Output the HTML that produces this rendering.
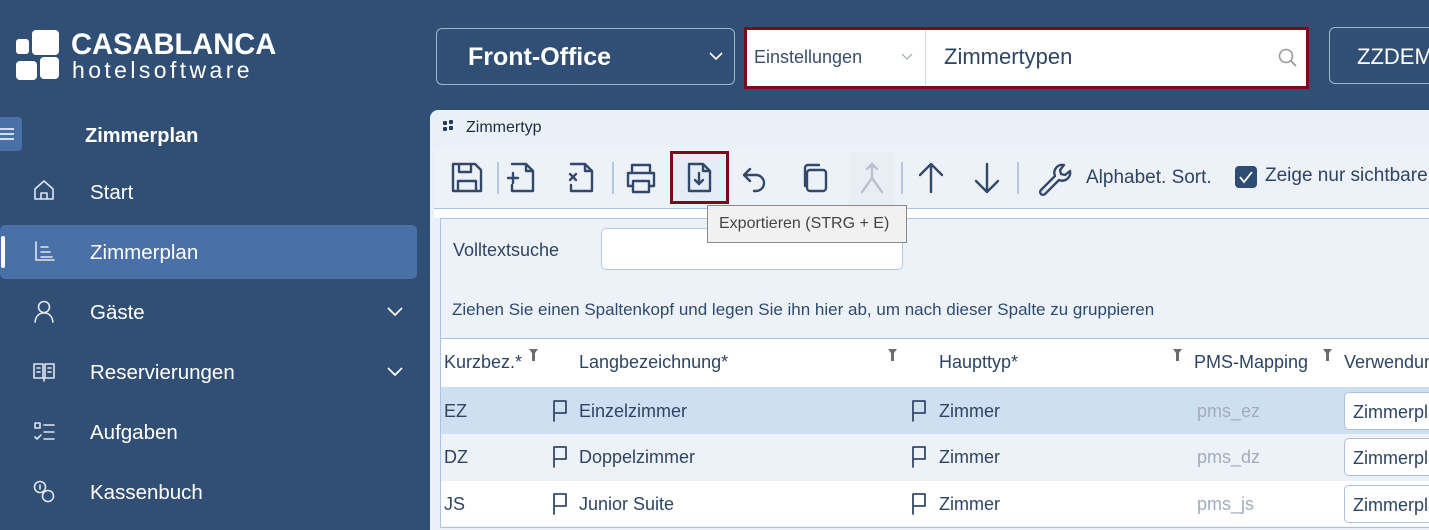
<!DOCTYPE html>
<html><head><meta charset="utf-8"><style>
*{box-sizing:border-box;margin:0;padding:0}
body{width:1429px;height:521px;overflow:hidden;background:#314f75;font-family:"Liberation Sans",sans-serif;position:relative}
.a{position:absolute}
.w{color:#fff}
.nav{font-size:20.5px;color:#fff}
.ic{stroke:#dfe6f0;fill:none;stroke-width:1.6;stroke-linecap:round;stroke-linejoin:round}
.tb{stroke:#34496a;fill:none;stroke-width:2.4;stroke-linecap:round;stroke-linejoin:round}
.sep{position:absolute;top:162px;width:2px;height:32px;background:#b5c8e2}
.hd{font-size:18px;color:#2e4463;top:352px}
.cell{font-size:18px;color:#2e4463}
.sel{position:absolute;left:1344px;width:100px;height:38px;background:#fff;border:1px solid #aac0dd;border-radius:5px;font-size:18px;color:#2e4463;padding:9px 0 0 8px}
</style></head><body>
<!-- logo -->
<div class="a" style="left:16px;top:39px;width:13px;height:15px;background:#fff;border-radius:3px"></div>
<div class="a" style="left:32px;top:30px;width:27px;height:25px;background:#fff;border-radius:4px"></div>
<div class="a" style="left:16px;top:61px;width:21px;height:19px;background:#fff;border-radius:4px"></div>
<div class="a" style="left:40px;top:57px;width:19px;height:22px;background:#fff;border-radius:4px"></div>
<div class="a w" style="left:71px;top:28px;font-size:30px;font-weight:bold;transform:scaleX(0.97);transform-origin:left">CASABLANCA</div>
<div class="a w" style="left:72px;top:57px;font-size:23px;letter-spacing:3.4px">hotelsoftware</div>
<!-- top controls -->
<div class="a" style="left:436px;top:28px;width:299px;height:57px;border:1px solid #9fb4d1;border-radius:6px"></div>
<div class="a w" style="left:468px;top:43px;font-size:25px;font-weight:bold">Front-Office</div>
<svg class="a" style="left:708px;top:50px" width="16" height="12"><path d="M2 3l6 6 6-6" stroke="#fff" stroke-width="1.6" fill="none"/></svg>
<div class="a" style="left:744px;top:27px;width:565px;height:62px;border:3px solid #7b0a1c;background:#fff"></div>
<div class="a" style="left:925px;top:30px;width:1px;height:55px;background:#d0d8e4"></div>
<div class="a" style="left:754px;top:47px;font-size:18px;color:#3b4e68">Einstellungen</div>
<svg class="a" style="left:900px;top:52px" width="14" height="10"><path d="M2 2l5 5 5-5" stroke="#9aa" stroke-width="1.2" fill="none"/></svg>
<div class="a" style="left:944px;top:44px;font-size:22px;color:#2e4463">Zimmertypen</div>
<svg class="a" style="left:1277px;top:47px" width="22" height="22"><circle cx="9" cy="9" r="6.5" stroke="#999" stroke-width="1.6" fill="none"/><path d="M14 14l5 5" stroke="#999" stroke-width="1.8"/></svg>
<div class="a" style="left:1329px;top:27px;width:120px;height:57px;border:1px solid #9fb4d1;border-radius:6px"></div>
<div class="a w" style="left:1357px;top:44px;font-size:22px">ZZDEMO</div>
<!-- sidebar -->
<div class="a" style="left:-6px;top:117px;width:28px;height:34px;background:#4a70a8;border-radius:4px"></div>
<svg class="a" style="left:0;top:126px" width="16" height="16"><path d="M0 3h14M0 8h14M0 13h14" stroke="#fff" stroke-width="1.6"/></svg>
<div class="a w" style="left:85px;top:125px;font-size:20px;font-weight:bold">Zimmerplan</div>
<div class="a" style="left:0;top:225px;width:417px;height:54px;background:#4a70a8;border-radius:5px"></div>
<div class="a" style="left:1px;top:236px;width:4px;height:32px;background:#fff;border-radius:2px"></div>
<div class="a nav" style="left:90px;top:181px">Start</div>
<div class="a nav" style="left:90px;top:241px">Zimmerplan</div>
<div class="a nav" style="left:90px;top:301px">Gäste</div>
<div class="a nav" style="left:90px;top:361px">Reservierungen</div>
<div class="a nav" style="left:90px;top:421px">Aufgaben</div>
<div class="a nav" style="left:90px;top:481px">Kassenbuch</div>
<svg class="a" style="left:0;top:0" width="430" height="521">
<path class="ic" d="M35 199v-10l9-8 9 8v10zM41 199v-6h6v6"/>
<path class="ic" d="M36 242v18h18M41 247h7M41 252h9M41 257h11"/>
<circle class="ic" cx="44" cy="307" r="5.5"/><path class="ic" d="M35 322c1-7 5-9 9-9s8 2 9 9"/>
<path class="ic" d="M34 364h9v14h-9zM45 364h9v14h-9zM37 368h3M37 372h3M48 368h3M48 372h3M44 378v3"/>
<path class="ic" d="M35 423h5v5h-5zM44 425h10M44 432h10M44 439h10M35 437l2 2 4-4"/>
<circle class="ic" cx="40" cy="487" r="5.5"/><circle class="ic" cx="48" cy="496" r="5.5"/><path class="ic" d="M40 485v4"/>
<path d="M388 308l7 7 7-7M388 368l7 7 7-7" stroke="#fff" stroke-width="1.8" fill="none"/>
</svg>
<!-- window -->
<div class="a" style="left:430px;top:110px;width:1010px;height:420px;background:#eaf0f7;border-radius:8px 0 0 0"></div>
<div class="a" style="left:443px;top:121px;width:4px;height:4px;background:#233a5a;border-radius:1px;box-shadow:6px -1px 0 #233a5a,0 6px 0 #233a5a,6px 5px 0 #233a5a"></div>
<div class="a" style="left:466px;top:119px;font-size:16px;color:#1c2b40">Zimmertyp</div>
<div class="a" style="left:434px;top:147px;width:1000px;height:62px;background:#edf2f9;border-bottom:1px solid #a9c3e6;border-radius:6px 0 0 0"></div>
<div class="a" style="left:670px;top:151px;width:59px;height:53px;border:3px solid #7b0a1c;background:#e4ecf6"></div>
<div class="a" style="left:849px;top:152px;width:45px;height:54px;background:#e9eef5"></div>
<div class="sep" style="left:497px"></div><div class="sep" style="left:612px"></div><div class="sep" style="left:901px"></div><div class="sep" style="left:1017px"></div>
<svg class="a" style="left:430px;top:140px" width="660" height="70">
<path class="tb" d="M23 24h22l6 6v21H23zM29 24v8h12v-8M28 51v-10h18v10"/>
<path class="tb" d="M82 24h14l7 7v20H82v-6M96 24v7h7M78 38h10M83 33v10"/>
<path class="tb" d="M141 24h14l7 7v20h-21v-6M155 24v7h7M140 34l6 6M146 34l-6 6"/>
<path class="tb" d="M202 33v-8h18v8M198 33h26v13h-5M203 46h-5V33M203 41h16v11h-16z"/>
<path class="tb" d="M259 24h14l7 7v20h-21zM273 24v7h7M269 33v10M265 40l4 4 4-4"/>
<path class="tb" d="M320 29l-6 6 6 6M314 35h12a8 8 0 010 16h-2"/>
<path class="tb" d="M375 46v-18a3 3 0 013-3h11M380 30h13a3 3 0 013 3v15a3 3 0 01-3 3h-13a3 3 0 01-3-3V33a3 3 0 013-3z"/>
<path d="M442 24v14l-10 14M442 38l10 14M437 29l5-5 5 5" stroke="#b9c3d0" stroke-width="2.4" fill="none" stroke-linecap="round"/>
<path class="tb" d="M501 52V25M490 35l11-11 11 11"/>
<path class="tb" d="M557 24v27M546 41l11 11 11-11"/>
<path class="tb" d="M634 25a8 8 0 00-9 11l-14 14a2.5 2.5 0 004 4l14-14a8 8 0 0011-9l-5 4-4-1-1-4z"/>
</svg>
<div class="a" style="left:1086px;top:167px;font-size:19px;color:#2e4463">Alphabet. Sort.</div>
<div class="a" style="left:1235px;top:166px;width:22px;height:22px;background:#2f4d74;border-radius:4px"></div>
<svg class="a" style="left:1235px;top:166px" width="22" height="22"><path d="M5 11l4 5 8-10" stroke="#fff" stroke-width="1.8" fill="none"/></svg>
<div class="a" style="left:1265px;top:165px;font-size:19px;color:#2e4463;white-space:nowrap">Zeige nur sichtbare</div>
<!-- panel -->
<div class="a" style="left:434px;top:209px;width:1000px;height:9px;background:#fff"></div>
<div class="a" style="left:440px;top:218px;width:1000px;height:310px;background:#edf2f9;border:1px solid #a9c3e6"></div>
<div class="a" style="left:453px;top:240px;font-size:18px;color:#2e4463">Volltextsuche</div>
<div class="a" style="left:601px;top:228px;width:302px;height:42px;background:#fff;border:1px solid #b5c8e2;border-radius:5px"></div>
<div class="a" style="left:452px;top:300px;font-size:17px;color:#2e4a6e">Ziehen Sie einen Spaltenkopf und legen Sie ihn hier ab, um nach dieser Spalte zu gruppieren</div>
<div class="a" style="left:441px;top:338px;width:999px;height:49px;background:#fff;border-top:1px solid #a9c3e6"></div>
<div class="a" style="left:441px;top:387px;width:999px;height:47px;background:#cfdff2"></div>
<div class="a" style="left:441px;top:434px;width:999px;height:47px;background:#edf2f9"></div>
<div class="a" style="left:441px;top:481px;width:999px;height:45px;background:#fff"></div>
<div class="a hd" style="left:444px">Kurzbez.*</div>
<div class="a hd" style="left:579px">Langbezeichnung*</div>
<div class="a hd" style="left:939px">Haupttyp*</div>
<div class="a hd" style="left:1194px">PMS-Mapping</div>
<div class="a hd" style="left:1344px">Verwendung</div>
<svg class="a" style="left:0;top:0" width="1429" height="521">
<g fill="#6c6c6c"><path d="M529 349h9l-3 4v8h-3v-8z"/><path d="M888 349h9l-3 4v8h-3v-8z"/><path d="M1173 349h9l-3 4v8h-3v-8z"/><path d="M1323 349h9l-3 4v8h-3v-8z"/></g>
<g stroke="#34496a" stroke-width="1.8" fill="none" stroke-linejoin="round" stroke-linecap="round">
<path d="M554 421v-20h12v12h-12M913 421v-20h12v12h-12"/>
<path d="M554 467v-20h12v12h-12M913 467v-20h12v12h-12"/>
<path d="M554 514v-20h12v12h-12M913 514v-20h12v12h-12"/>
</g></svg>
<div class="a cell" style="left:444px;top:401px">EZ</div>
<div class="a cell" style="left:579px;top:401px">Einzelzimmer</div>
<div class="a cell" style="left:939px;top:401px">Zimmer</div>
<div class="a cell" style="left:1197px;top:401px;color:#a3acbb">pms_ez</div>
<div class="sel" style="top:392px">Zimmerplan</div>
<div class="a cell" style="left:444px;top:447px">DZ</div>
<div class="a cell" style="left:579px;top:447px">Doppelzimmer</div>
<div class="a cell" style="left:939px;top:447px">Zimmer</div>
<div class="a cell" style="left:1197px;top:447px;color:#a3acbb">pms_dz</div>
<div class="sel" style="top:438px">Zimmerplan</div>
<div class="a cell" style="left:444px;top:494px">JS</div>
<div class="a cell" style="left:579px;top:494px">Junior Suite</div>
<div class="a cell" style="left:939px;top:494px">Zimmer</div>
<div class="a cell" style="left:1197px;top:494px;color:#a3acbb">pms_js</div>
<div class="sel" style="top:485px">Zimmerplan</div>
<!-- tooltip -->
<div class="a" style="left:707px;top:205px;width:200px;height:38px;background:#f1f1f1;border:1px solid #8a8a8a"></div>
<div class="a" style="left:719px;top:215px;font-size:16px;color:#444">Exportieren (STRG + E)</div>
</body></html>
